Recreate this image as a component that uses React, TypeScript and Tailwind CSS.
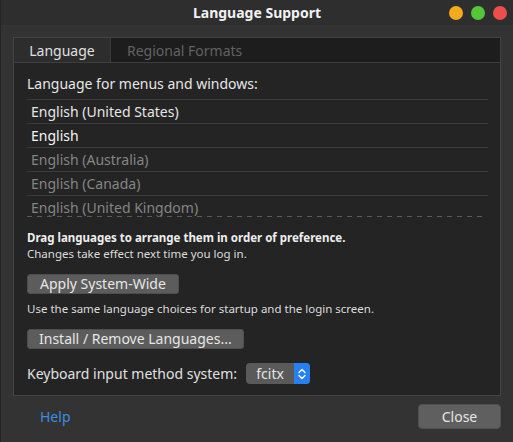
import React from 'react';

const languages = [
  { name: 'English (United States)', tone: 'text-[#e6e6e6]' },
  { name: 'English', tone: 'text-[#f5f5f5]' },
  { name: 'English (Australia)', tone: 'text-[#858585]' },
  { name: 'English (Canada)', tone: 'text-[#858585]' },
  { name: 'English (United Kingdom)', tone: 'text-[#858585]' },
];

function SpinArrows() {
  return (
    <svg width="10" height="14" viewBox="0 0 10 14" fill="none">
      <path d="M2 5.5 L5 2.5 L8 5.5" stroke="white" strokeWidth="1.4" strokeLinecap="round" strokeLinejoin="round" />
      <path d="M2 8.5 L5 11.5 L8 8.5" stroke="white" strokeWidth="1.4" strokeLinecap="round" strokeLinejoin="round" />
    </svg>
  );
}

export default function App() {
  return (
    <div
      className="w-[513px] h-[442px] bg-[#333333] border-l border-[#242424] flex flex-col text-[#e6e6e6] overflow-hidden"
      style={{ fontFamily: '"Noto Sans", "DejaVu Sans", sans-serif' }}
    >
      {/* Title bar */}
      <div className="h-[25px] bg-[#2e2e2e] grid grid-cols-[1fr_auto_1fr] items-center">
        <div />
        <span className="text-[14px] font-bold text-[#f2f2f2] leading-none">Language Support</span>
        <div className="flex justify-end gap-[8px] pr-[6px]">
          <span className="w-[14px] h-[14px] rounded-full bg-[#f3ab1b]" />
          <span className="w-[14px] h-[14px] rounded-full bg-[#55c53a]" />
          <span className="w-[14px] h-[14px] rounded-full bg-[#ec4e49]" />
        </div>
      </div>

      {/* Notebook */}
      <div className="mx-[12px] mt-[12px] h-[359px] border border-[#444444] flex flex-col">
        <div className="h-[25px] bg-[#1d1d1d] border-b border-[#3d3d3d] flex text-[14px]">
          <div className="w-[97px] bg-[#2d2d2d] border-r border-[#3a3a3a] flex items-center justify-center text-[#e0e0e0]">
            Language
          </div>
          <div className="px-[16px] flex items-center text-[#626262]">Regional Formats</div>
        </div>

        <div className="flex-1 bg-[#242424] pl-[13px] pr-[12px] pt-[12px] flex flex-col text-[14px]">
          <div className="leading-[18px] text-[#e6e6e6]">Language for menus and windows:</div>

          <div className="mt-[6px] h-[117px] overflow-hidden border-t border-[#3b3b3b]">
            {languages.map((l) => (
              <div key={l.name} className={`h-[24px] border-b border-[#3b3b3b] pl-[4px] flex items-center ${l.tone}`}>
                {l.name}
              </div>
            ))}
          </div>
          <div className="h-px mr-[5px] bg-[repeating-linear-gradient(90deg,#595959_0_5px,transparent_5px_10px)]" />

          <div className="mt-[13px] text-[11.5px] leading-[16px]">
            <div className="font-bold text-[#eeeeee]">Drag languages to arrange them in order of preference.</div>
            <div className="text-[#dcdcdc]">Changes take effect next time you log in.</div>
          </div>

          <button className="mt-[12px] self-start h-[20px] px-[12px] rounded-[3px] bg-[#5c5c5c] border border-[#4e4e4e] text-[14px] leading-none text-[#e6e6e6]">
            Apply System-Wide
          </button>

          <div className="mt-[7px] text-[11.5px] leading-[16px] text-[#dcdcdc]">
            Use the same language choices for startup and the login screen.
          </div>

          <button className="mt-[12px] self-start h-[20px] px-[11px] rounded-[3px] bg-[#5c5c5c] border border-[#4e4e4e] text-[14px] leading-none text-[#e6e6e6]">
            Install / Remove Languages...
          </button>

          <div className="mt-[14px] flex items-center gap-[9px]">
            <span className="text-[#e0e0e0]">Keyboard input method system:</span>
            <div className="h-[21px] w-[64px] rounded-[4px] bg-[#5a5a5a] flex overflow-hidden">
              <span className="flex-1 flex items-center justify-center text-[#e6e6e6] leading-none">fcitx</span>
              <span className="w-[16px] bg-[#2680f2] flex items-center justify-center">
                <SpinArrows />
              </span>
            </div>
          </div>
        </div>
      </div>

      {/* Footer */}
      <div className="mt-[8px] pl-[39px] pr-[12px] flex items-center justify-between">
        <span className="text-[14px] text-[#3b8de2]">Help</span>
        <button className="w-[83px] h-[25px] rounded-[4px] bg-[#5f5f5f] border border-[#505050] text-[14px] text-[#e6e6e6]">
          Close
        </button>
      </div>
    </div>
  );
}
